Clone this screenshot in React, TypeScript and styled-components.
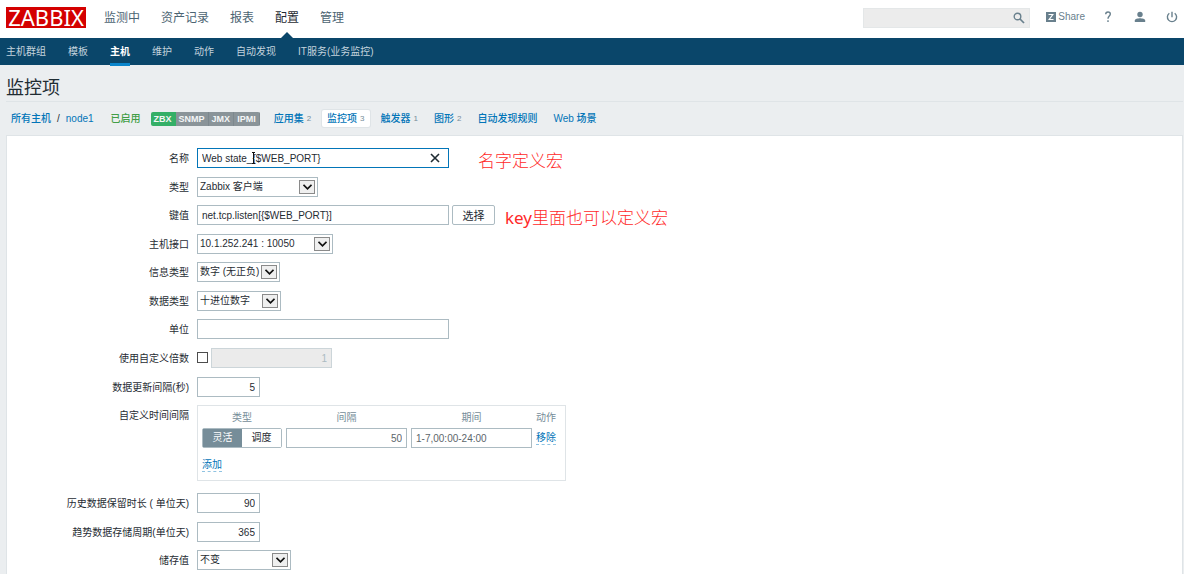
import React from "react";
import styled, { createGlobalStyle, css } from "styled-components";

const sans = `"Liberation Sans", "Noto Sans CJK SC", sans-serif`;
const c = {
  ink: "#1f2c33",
  link: "#0275b8",
  nav: "#0a466a",
  slate: "#768d99",
  line: "#dfe4e7",
  border: "#acbbc2",
  page: "#ebeef0",
};

const Global = createGlobalStyle`
  *, *::before, *::after { box-sizing: border-box; }
  body { margin: 0; background: ${c.page}; color: ${c.ink}; font: 10px/20px ${sans}; }
  a { text-decoration: none; color: ${c.link}; }
  button, input, select { font-family: inherit; margin: 0; }
  svg { display: block; }
`;

const Header = styled.header`
  display: flex;
  align-items: center;
  justify-content: space-between;
  height: 38px;
  padding: 0 6px;
  background: #fff;
`;
const Cluster = styled.div`
  display: flex;
  align-items: center;
`;
const Logo = styled.a`
  width: 80px;
  height: 21px;
  margin: 0 18px 3px 0;
  background: #d40000;
  color: #fff;
  font: 22px/21px "Noto Sans", sans-serif;
  text-align: center;
`;
const TopMenu = styled.nav`
  display: flex;
  gap: 21px;
  height: 38px;
`;
const TopLink = styled.a<{ $active?: boolean }>`
  position: relative;
  line-height: 36px;
  font-size: 12px;
  color: ${(p) => (p.$active ? c.ink : "#4c6472")};
  ${(p) =>
    p.$active &&
    css`
      &::after {
        content: "";
        position: absolute;
        left: 50%;
        bottom: 0;
        margin-left: -6px;
        border: 6px solid transparent;
        border-top: 0;
        border-bottom-color: ${c.nav};
      }
    `}
`;
const Search = styled.label`
  display: flex;
  align-items: center;
  width: 167px;
  height: 20px;
  margin: 0 16px 3px 0;
  padding-right: 4px;
  background: #ececec;
  border: 1px solid #e4e7e8;
  input {
    flex: 1;
    min-width: 0;
    border: 0;
    background: none;
    outline: 0;
  }
`;
const Tools = styled.div`
  display: flex;
  align-items: center;
  height: 20px;
  margin-bottom: 4px;
  color: #69808d;
  a {
    display: flex;
    align-items: center;
    gap: 2px;
    color: inherit;
  }
`;
const ToolLink = styled.a<{ $gap?: number }>`
  margin-left: ${(p) => p.$gap ?? 0}px;
  font-size: 10px;
`;

const SubMenu = styled.nav`
  display: flex;
  gap: 22px;
  height: 27px;
  padding: 0 6px;
  background: ${c.nav};
`;
const SubLink = styled.a<{ $active?: boolean }>`
  height: 28px;
  line-height: 27px;
  color: ${(p) => (p.$active ? "#fff" : "#c3d3dd")};
  font-weight: ${(p) => (p.$active ? 700 : 400)};
  box-shadow: ${(p) => (p.$active ? `inset 0 -3px #0a85cc` : "none")};
`;

const Main = styled.main`
  padding: 8px 1px 0 6px;
`;
const Title = styled.h1`
  margin: 0;
  height: 29px;
  font-size: 18px;
  font-weight: 400;
  line-height: 30px;
  border-bottom: 1px solid ${c.line};
`;
const Crumbs = styled.div`
  display: flex;
  align-items: center;
  height: 33px;
  padding: 0 5px;
  font-weight: 500;
  white-space: nowrap;
`;
const Slash = styled.span`
  margin: 0 6px;
`;
const Enabled = styled.span`
  margin: 0 10px 0 17px;
  color: #429e47;
`;
const Badges = styled.span`
  display: flex;
  height: 14px;
  margin-right: 9px;
  border-radius: 2px;
  overflow: hidden;
  color: #f4f6f7;
  font-size: 9px;
  line-height: 14px;
  font-weight: 700;
`;
const Badge = styled.span<{ $on?: boolean }>`
  padding: 0 3px;
  background: ${(p) => (p.$on ? "#34af67" : "#8a9499")};
  border-right: 1px solid ${(p) => (p.$on ? "#34af67" : "#7d888e")};
`;
const Tab = styled.a<{ $active?: boolean }>`
  display: flex;
  gap: 3px;
  height: 17px;
  margin-right: 6px;
  padding: 0 5px;
  line-height: 17px;
  border-radius: 2px;
  background: ${(p) => (p.$active ? "#fff" : "none")};
  box-shadow: ${(p) => (p.$active ? `0 0 0 1px ${c.line}` : "none")};
  small {
    font-size: 8px;
    color: ${c.slate};
  }
`;

const Panel = styled.form`
  display: flex;
  flex-direction: column;
  gap: 8px;
  padding: 12px 0 8px;
  background: #fff;
  border: 1px solid ${c.line};
`;
const Row = styled.div<{ $text?: boolean }>`
  display: flex;
  align-items: flex-start;
  min-height: ${(p) => (p.$text ? 21 : 20)}px;
`;
const RowLabel = styled.label`
  width: 182px;
  height: 20px;
  margin-right: 8px;
  line-height: 22px;
  text-align: right;
`;
const field = css`
  height: 20px;
  border: 1px solid ${c.border};
  border-radius: 0;
  background: #fff;
  color: ${c.ink};
  font-size: 10px;
  outline: 0;
`;
const Input = styled.input<{ $w: number; $right?: boolean; $muted?: boolean; $focus?: boolean }>`
  ${field}
  width: ${(p) => p.$w}px;
  padding: 0 4px;
  text-align: ${(p) => (p.$right ? "right" : "left")};
  ${(p) => p.$muted && "color: #5d666b;"}
  ${(p) => p.$focus && `border-color: ${c.link};`}
  &:disabled {
    background: #ebebeb;
    border-color: #ccd5d9;
    color: #acbbc2;
  }
`;
const InputBox = styled.span`
  position: relative;
  display: flex;
`;
const Clear = styled.button`
  position: absolute;
  right: 8px;
  top: 4px;
  padding: 1px;
  border: 0;
  background: none;
  color: ${c.ink};
`;
const Beam = styled.svg`
  position: absolute;
  left: 54px;
  top: 4px;
`;
const SelectBox = styled.span<{ $w: number }>`
  position: relative;
  width: ${(p) => p.$w}px;
  select {
    ${field}
    display: block;
    appearance: none;
    width: 100%;
    padding: 0 0 2px 2px;
  }
`;
const Arrow = styled.span`
  position: absolute;
  right: 3px;
  top: 3px;
  display: grid;
  place-items: center;
  width: 16px;
  height: 14px;
  border: 1px solid #8a8a8a;
  background: #efefef;
  pointer-events: none;
`;
const Button = styled.button`
  ${field}
  width: 43px;
  margin-left: 3px;
  padding: 0;
  border-radius: 2px;
  font-size: 11px;
`;
const Check = styled.input`
  appearance: none;
  width: 11px;
  height: 11px;
  margin: 4px 3px 0 0;
  border: 1px solid #4d4d4d;
  background: #fff;
`;
const Note = styled.span<{ $gap: number }>`
  height: 20px;
  margin-left: ${(p) => p.$gap}px;
  color: #ff2a2a;
  font: 300 17px/23px "Noto Sans CJK SC", sans-serif;
  b {
    font-family: "Noto Sans", sans-serif;
    font-weight: 400;
  }
`;

const Intervals = styled.div`
  width: 369px;
  height: 76px;
  margin-bottom: 4px;
  padding: 2px 4px;
  border: 1px solid ${c.line};
  table {
    border-collapse: collapse;
  }
  th {
    padding: 0 4px 0 0;
    font-weight: 400;
    color: ${c.slate};
    line-height: 20px;
  }
  td {
    padding: 0 4px 0 0;
    vertical-align: top;
    white-space: nowrap;
  }
  th:last-child,
  td:last-child {
    padding-right: 0;
  }
`;
const Toggle = styled.div`
  display: flex;
  height: 20px;
  width: 80px;
  border: 1px solid ${c.border};
  border-radius: 2px;
`;
const ToggleItem = styled.label<{ $on?: boolean }>`
  flex: 1;
  line-height: 18px;
  text-align: center;
  background: ${(p) => (p.$on ? c.slate : "#fff")};
  color: ${(p) => (p.$on ? "#fff" : c.ink)};
  input {
    position: absolute;
    opacity: 0;
    pointer-events: none;
  }
`;
const Action = styled.button<{ $top: number }>`
  display: block;
  padding: 0;
  border: 0;
  border-bottom: 1px dashed #8fc3e2;
  background: none;
  color: ${c.link};
  font-size: 10px;
  line-height: 12px;
  margin-top: ${(p) => p.$top}px;
`;

function Select({ id, w, value }: { id: string; w: number; value: string }) {
  return (
    <SelectBox $w={w}>
      <select id={id}>
        <option>{value}</option>
      </select>
      <Arrow>
        <svg width="9" height="6" viewBox="0 0 9 6" fill="none" stroke="#111" strokeWidth="1.7">
          <path d="M.5 .8l4 4 4-4" />
        </svg>
      </Arrow>
    </SelectBox>
  );
}

const topItems = ["监测中", "资产记录", "报表", "配置", "管理"];
const subItems = ["主机群组", "模板", "主机", "维护", "动作", "自动发现", "IT服务(业务监控)"];
const tabs: [string, string?][] = [
  ["应用集", "2"],
  ["监控项", "3"],
  ["触发器", "1"],
  ["图形", "2"],
  ["自动发现规则"],
  ["Web 场景"],
];

export default function App() {
  return (
    <>
      <Global />
      <Header>
        <Cluster>
          <Logo href="#home">ZABBIX</Logo>
          <TopMenu>
            {topItems.map((t) => (
              <TopLink key={t} href="#menu" $active={t === "配置"}>
                {t}
              </TopLink>
            ))}
          </TopMenu>
        </Cluster>
        <Cluster>
          <Search>
            <input aria-label="search" />
            <svg width="12" height="12" viewBox="0 0 12 12" fill="none" stroke="#69808d">
              <circle cx="4.5" cy="4.5" r="3.3" strokeWidth="1.4" />
              <path d="M7 7l4 4" strokeWidth="1.7" />
            </svg>
          </Search>
          <Tools>
            <ToolLink href="#share">
              <svg width="10" height="10" viewBox="0 0 10 10">
                <path fill="#69808d" d="M0 0h10v10H0z" />
                <path d="M2.5 2.5h4.3L3.2 7.5h4.3" fill="none" stroke="#fff" strokeWidth="1.2" />
              </svg>
              Share
            </ToolLink>
            <ToolLink href="#help" $gap={19} aria-label="help">
              <svg width="8" height="12" viewBox="0 0 8 12" fill="none" stroke="#69808d" strokeWidth="1.4">
                <path d="M1.7 3.3C1.7 1.8 2.7 1 4 1s2.3.8 2.3 2.1C6.3 4.900 4 5.200 4 7.700M4 9.300v1.600" />
              </svg>
            </ToolLink>
            <ToolLink href="#profile" $gap={22} aria-label="profile">
              <svg width="12" height="12" viewBox="0 0 12 12" fill="#69808d">
                <circle cx="6" cy="3.5" r="2.7" />
                <path d="M.8 11V9.600C.8 8 4 7.300 6 7.300s5.200.7 5.200 2.300V11z" />
              </svg>
            </ToolLink>
            <ToolLink href="#logout" $gap={20} aria-label="logout">
              <svg width="12" height="12" viewBox="0 0 12 12" fill="none" stroke="#69808d" strokeWidth="1.4">
                <path d="M6 .8v5.400M3.300 2.300a4.600 4.600 0 1 0 5.400 0" />
              </svg>
            </ToolLink>
          </Tools>
        </Cluster>
      </Header>
      <SubMenu>
        {subItems.map((t) => (
          <SubLink key={t} href="#sub" $active={t === "主机"}>
            {t}
          </SubLink>
        ))}
      </SubMenu>
      <Main>
        <Title>监控项</Title>
        <Crumbs>
          <a href="#hosts">所有主机</a>
          <Slash>/</Slash>
          <a href="#node">node1</a>
          <Enabled>已启用</Enabled>
          <Badges>
            <Badge $on>ZBX</Badge>
            <Badge>SNMP</Badge>
            <Badge>JMX</Badge>
            <Badge>IPMI</Badge>
          </Badges>
          {tabs.map(([t, n]) => (
            <Tab key={t} href="#tab" $active={t === "监控项"}>
              {t}
              {n && <small>{n}</small>}
            </Tab>
          ))}
        </Crumbs>
        <Panel>
          <Row $text>
            <RowLabel htmlFor="name">名称</RowLabel>
            <InputBox>
              <Input id="name" $w={252} $focus defaultValue="Web state_{$WEB_PORT}" />
              <Beam width="5" height="12" viewBox="0 0 5 12" fill="none" stroke="#111">
                <path d="M1 .5h3M2.5.5v11M1 11.5h3" />
              </Beam>
              <Clear type="button" aria-label="clear">
                <svg width="10" height="10" viewBox="0 0 10 10" stroke={c.ink} strokeWidth="1.6">
                  <path d="M1 1l8 8M9 1L1 9" />
                </svg>
              </Clear>
            </InputBox>
            <Note $gap={29}>名字定义宏</Note>
          </Row>
          <Row>
            <RowLabel htmlFor="type">类型</RowLabel>
            <Select id="type" w={121} value="Zabbix 客户端" />
          </Row>
          <Row $text>
            <RowLabel htmlFor="key">键值</RowLabel>
            <Input id="key" $w={252} defaultValue="net.tcp.listen[{$WEB_PORT}]" />
            <Button type="button">选择</Button>
            <Note $gap={10}>
              <b>key</b>里面也可以定义宏
            </Note>
          </Row>
          <Row>
            <RowLabel htmlFor="iface">主机接口</RowLabel>
            <Select id="iface" w={136} value="10.1.252.241 : 10050" />
          </Row>
          <Row $text>
            <RowLabel htmlFor="info">信息类型</RowLabel>
            <Select id="info" w={83} value="数字 (无正负)" />
          </Row>
          <Row>
            <RowLabel htmlFor="data">数据类型</RowLabel>
            <Select id="data" w={84} value="十进位数字" />
          </Row>
          <Row $text>
            <RowLabel htmlFor="unit">单位</RowLabel>
            <Input id="unit" $w={252} />
          </Row>
          <Row $text>
            <RowLabel htmlFor="multi">使用自定义倍数</RowLabel>
            <Check id="multi" type="checkbox" />
            <Input aria-label="multiplier" $w={121} $right disabled defaultValue="1" />
          </Row>
          <Row>
            <RowLabel htmlFor="delay">数据更新间隔(秒)</RowLabel>
            <Input id="delay" $w={63} $right defaultValue="5" />
          </Row>
          <Row>
            <RowLabel htmlFor="interval">自定义时间间隔</RowLabel>
            <Intervals>
              <table>
                <thead>
                  <tr>
                    <th>类型</th>
                    <th>间隔</th>
                    <th>期间</th>
                    <th>动作</th>
                  </tr>
                </thead>
                <tbody>
                  <tr>
                    <td>
                      <Toggle>
                        <ToggleItem $on>
                          <input type="radio" name="kind" defaultChecked />
                          灵活
                        </ToggleItem>
                        <ToggleItem>
                          <input type="radio" name="kind" />
                          调度
                        </ToggleItem>
                      </Toggle>
                    </td>
                    <td>
                      <Input id="interval" $w={121} $right $muted defaultValue="50" />
                    </td>
                    <td>
                      <Input aria-label="期间" $w={121} $muted defaultValue="1-7,00:00-24:00" />
                    </td>
                    <td>
                      <Action type="button" $top={4}>
                        移除
                      </Action>
                    </td>
                  </tr>
                </tbody>
              </table>
              <Action type="button" $top={10}>
                添加
              </Action>
            </Intervals>
          </Row>
          <Row $text>
            <RowLabel htmlFor="history">历史数据保留时长 ( 单位天)</RowLabel>
            <Input id="history" $w={63} $right defaultValue="90" />
          </Row>
          <Row>
            <RowLabel htmlFor="trends">趋势数据存储周期(单位天)</RowLabel>
            <Input id="trends" $w={63} $right defaultValue="365" />
          </Row>
          <Row>
            <RowLabel htmlFor="store">储存值</RowLabel>
            <Select id="store" w={94} value="不变" />
          </Row>
        </Panel>
      </Main>
    </>
  );
}
